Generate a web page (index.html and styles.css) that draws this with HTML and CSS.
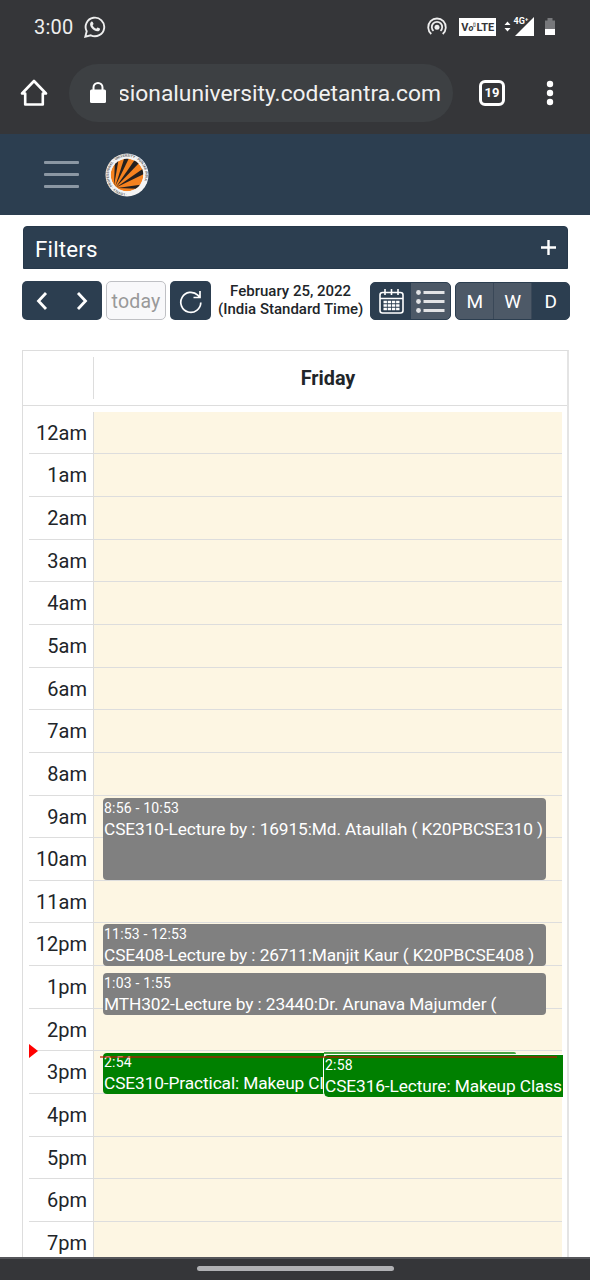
FILE: index.html
```html
<!DOCTYPE html>
<html lang="en">
<head>
<meta charset="utf-8">
<meta name="viewport" content="width=device-width">
<title>Schedule</title>
<link rel="stylesheet" href="styles.css">
</head>
<body>
<div class="phone">
  <header class="browser">
    <div class="status">
      <span class="clock">3:00</span>
      <svg class="whatsapp" width="22" height="22" viewBox="0 0 22 22"><path d="M2.700 15.300 1.300 20.700l5.500-1.400A9.300 9.300 0 1 0 2.700 15.300Z" fill="none" stroke="#eee" stroke-width="1.900"/><path d="M7.200 5.800c.5-.5 1.200-.4 1.500.2l.8 1.800c.1.500-.6 1.100-.9 1.500.9 1.700 2.100 2.800 3.800 3.500.5-.5.9-1.300 1.400-1.200l2 1c.5.3.2 1.500-.5 2.100-1.300 1-3.200.6-5.100-.5-2-1.200-3.500-3-4-5-.3-1.400 0-2.600 1-3.400Z" fill="#eee"/></svg>
      <svg class="hotspot" width="20" height="20" viewBox="0 0 20 20"><g fill="none" stroke="#eee" stroke-width="1.800"><path d="M4.300 17A8.800 8.800 0 1 1 15.700 17"/><path d="M6.500 13.900A5.200 5.200 0 1 1 13.500 13.900"/></g><circle cx="10" cy="10.300" r="2.500" fill="#eee"/></svg>
      <span class="volte">V<i>o</i><sup>▯</sup>LTE</span>
      <svg class="signal" width="31" height="24" viewBox="0 0 31 24"><path d="M.5 10 3.500 6.500 6.500 10ZM.5 13h6l-3 3.500Z" fill="#fff"/><path d="M11 21 30 2V21Z" fill="#fff"/><text x="9.500" y="8.500" class="net">4G⁺</text></svg>
      <svg class="battery" width="10" height="18" viewBox="0 0 10 18"><path d="M0 2.500h2.500V0h5v2.500H10V11H0Z" fill="#77787b"/><path d="M0 11h10v6H0Z" fill="#fff"/></svg>
    </div>
    <div class="address">
      <svg class="home" width="28" height="28" viewBox="0 0 28 28"><path d="M2 14.500 14 2l12 12.500H22.800V25.500H5.200V14.500Z" fill="none" stroke="#fff" stroke-width="2.600" stroke-linejoin="round"/></svg>
      <div class="url">
        <svg width="16" height="22" viewBox="0 0 16 22"><path d="M3.500 9V5.500a4.500 4.500 0 0 1 9 0V9" fill="none" stroke="#fff" stroke-width="2"/><rect y="7.500" width="16" height="13.500" rx="1.500" fill="#fff"/></svg>
        <div class="clip"><span>sionaluniversity.codetantra.com</span></div>
      </div>
      <span class="tabs">19</span>
      <svg class="dots" width="8" height="26" viewBox="0 0 8 26"><g fill="#fff"><circle cx="4" cy="4" r="3.200"/><circle cx="4" cy="13" r="3.200"/><circle cx="4" cy="22" r="3.200"/></g></svg>
    </div>
  </header>
  <nav class="nav">
    <div class="burger"><i></i><i></i><i></i></div>
    <svg width="44" height="44" viewBox="0 0 44 44">
      <defs><clipPath id="disc"><circle cx="22" cy="22" r="16.300"/></clipPath><path id="ring" d="M22 40.300A18.300 18.300 0 1 1 22.100 40.300"/></defs>
      <circle cx="22" cy="22" r="21.500" fill="#f4f4f4"/>
      <text class="seal"><textPath href="#ring">· LOVELY · PROFESSIONAL · UNIVERSITY · PUNJAB INDIA</textPath></text>
      <g clip-path="url(#disc)"><circle cx="22" cy="22" r="16.300" fill="#f5821f"/><g fill="#24201f"><path d="M9 33 10 4 14 4Z"/><path d="M10 34 20 3 25 3Z"/><path d="M11 34 31 5 35 9Z"/><path d="M11 34.500 39 15 41 20Z"/><path d="M12 35 40 31 39 36Z"/></g></g>
    </svg>
  </nav>
  <main class="page">
    <div class="filters"><span>Filters</span><svg width="15" height="15" viewBox="0 0 15 15"><path d="M7.500 0V15M0 7.500H15" stroke="#fff" stroke-width="2.400"/></svg></div>
    <div class="toolbar">
      <div class="btn arrows">
        <svg width="12" height="20" viewBox="0 0 12 20"><path d="M10 2 2.500 10 10 18"/></svg>
        <svg width="12" height="20" viewBox="0 0 12 20"><path d="M2 2 9.500 10 2 18"/></svg>
      </div>
      <div class="btn today">today</div>
      <div class="btn reload"><svg width="24" height="24" viewBox="0 0 24 24"><path d="M21.800 12.500A10 10 0 1 1 18.800 5.200L20.500 7M21 1V7.500H14.500" fill="none" stroke="#fff" stroke-width="1.700"/></svg></div>
      <h2 class="date"><span>February 25, 2022</span><br><span class="zone">(India Standard Time)</span></h2>
      <div class="btn group views">
        <div class="on"><svg width="25" height="25" viewBox="0 0 25 25"><g fill="none" stroke="#fff" stroke-width="1.600"><rect x="1" y="3.500" width="23" height="20.500" rx="2.500"/><path d="M1 9.500H24M6 0V6M12.500 0V6M19 0V6"/></g><path d="M4.500 13H20.500M4.500 16.500H20.500M4.500 20H20.500" stroke="#fff" stroke-width="2.400" stroke-dasharray="3.400 .8"/></svg></div>
        <div><svg width="29" height="25" viewBox="0 0 29 25"><path d="M7.500 3.500H28.500M7.500 12.500H28.500M7.500 21.500H28.500" stroke="#e2e3e5" stroke-width="2.800"/><g fill="#e2e3e5"><circle cx="2.500" cy="3.500" r="2.400"/><circle cx="2.500" cy="12.500" r="2.400"/><circle cx="2.500" cy="21.500" r="2.400"/></g></svg></div>
      </div>
      <div class="btn group spans"><div>M</div><div>W</div><div class="on">D</div></div>
    </div>
    <section class="calendar">
      <div class="head"><div class="corner"></div><div class="day">Friday</div></div>
      <div class="grid">
        <div class="hour">12am</div><div class="hour">1am</div><div class="hour">2am</div><div class="hour">3am</div><div class="hour">4am</div><div class="hour">5am</div><div class="hour">6am</div><div class="hour">7am</div><div class="hour">8am</div><div class="hour">9am</div><div class="hour">10am</div><div class="hour">11am</div><div class="hour">12pm</div><div class="hour">1pm</div><div class="hour">2pm</div><div class="hour">3pm</div><div class="hour">4pm</div><div class="hour">5pm</div><div class="hour">6pm</div><div class="hour">7pm</div>
        <div class="event e1"><small>8:56 - 10:53</small><p><span>CSE310-Lecture by : 16915:Md. Ataullah ( K20PBCSE310 )</span></p></div>
        <div class="event e2"><small>11:53 - 12:53</small><p><span>CSE408-Lecture by : 26711:Manjit Kaur ( K20PBCSE408 )</span></p></div>
        <div class="event e3"><small>1:03 - 1:55</small><p><span>MTH302-Lecture by : 23440:Dr. Arunava Majumder (</span></p></div>
        <div class="event live e4"><small>2:54</small><p><span>CSE310-Practical: Makeup Cl</span></p></div>
        <div class="sliver"></div>
        <div class="event live e5"><small>2:58</small><p><span>CSE316-Lecture: Makeup Class</span></p></div>
        <div class="now"></div><div class="marker"></div>
      </div>
    </section>
  </main>
  <footer class="gesture"><i></i></footer>
</div>
</body>
</html>
```
FILE: styles.css
```css
* { box-sizing: border-box; }
body { margin: 0; font-family: Roboto, "Liberation Sans", sans-serif; color: #212529; background: #fff; }
svg { display: block; flex: none; }
.phone { width: 590px; height: 1280px; display: flex; flex-direction: column; overflow: hidden; }
.browser { height: 134px; background: #353639; flex: none; }
.status { height: 54px; display: flex; align-items: center; padding: 0 35px 0 34px; color: #eee; }
.clock { font-size: 20px; width: 51px; letter-spacing: .2px; }
.hotspot { margin-left: 321px; }
.volte { width: 37px; height: 18px; margin-left: 12px; background: #fff; color: #353639; font-size: 11px; font-weight: 700; line-height: 19px; text-align: center; white-space: nowrap; }
.volte i { font-size: 9px; }
.volte sup { font-size: 5px; line-height: 0; }
.signal { margin-left: 8px; }
.net { font-size: 9px; font-weight: 700; fill: #fff; font-family: Roboto, sans-serif; }
.battery { margin-left: 10px; }
.address { height: 78px; display: flex; align-items: center; padding: 0 0 0 20px; }
.url { width: 384px; height: 58px; margin-left: 21px; padding-left: 21px; border-radius: 29px; background: #3d4043; display: flex; align-items: center; }
.clip { width: 325px; margin-left: 14px; overflow: hidden; white-space: nowrap; color: #f1f1f1; font-size: 22.800px; line-height: 32px; padding-top: 1px; }
.clip span { margin-left: -2px; }
.tabs { width: 26px; height: 26px; margin-left: 26px; border: 3px solid #fff; border-radius: 6px; color: #fff; font-size: 13px; line-height: 20px; font-weight: 700; text-align: center; }
.dots { margin-left: 41px; }
.nav { height: 81px; flex: none; background: #2c3e50; display: flex; align-items: center; padding-left: 44px; }
.burger { width: 35px; height: 27px; margin-right: 26px; display: flex; flex-direction: column; justify-content: space-between; }
.burger i { height: 3px; background: #8b97a3; border-radius: 1px; }
.seal { font-size: 3.500px; fill: #666; font-weight: 700; }
.page { flex: 1; min-height: 0; overflow: hidden; padding: 11px 21px 0 22px; }
.filters { height: 43px; margin: 0 1px 0 1px; background: #2c3e50; color: #fff; border: 1px solid #26384a; border-radius: 4px 4px 0 0; display: flex; align-items: center; justify-content: space-between; padding: 3px 11px 0 11px; font-size: 22.300px; letter-spacing: .2px; }
.filters svg { margin-top: -4px; }
.toolbar { display: flex; height: 39px; margin-top: 12px; }
.btn { height: 39px; border-radius: 5px; background: #2c3e50; color: #fff; display: flex; align-items: center; justify-content: center; flex: none; }
.arrows { width: 80px; gap: 28px; }
.arrows path { fill: none; stroke: #fff; stroke-width: 2.800; }
.today { width: 60px; margin-left: 4px; padding-top: 2px; background: #f8f8fa; border: 1px solid #bfc0c4; color: #999; font-size: 19.500px; letter-spacing: .2px; }
.reload { width: 41px; margin-left: 4px; padding-top: 2px; }
.date { margin: 0 0 0 7px; padding-top: 1px; width: 151px; font-size: 15px; line-height: 18px; font-weight: 500; text-align: center; white-space: nowrap; }
.group { height: 38px; overflow: hidden; margin-top: 1px; border: 1px solid #2c3e50; background: #4d5967; }
.group div { flex: 1; height: 100%; display: flex; align-items: center; justify-content: center; }
.group .on { background: #2c3e50; }
.views { width: 81px; margin-left: 7px; }
.spans { width: 115px; margin-left: 4px; font-size: 19px; }
.spans div + div { border-left: 1px solid #3a4858; }
.calendar { width: 547px; margin-top: 30px; border: 1px solid #ddd; border-right: 2px solid #e4e4e4; }
.head { height: 55px; border-bottom: 1px solid #ddd; display: flex; padding: 6px 5px 6px 0; }
.corner { width: 71px; border-right: 1px solid #ddd; }
.day { flex: 1; text-align: center; font-size: 19.800px; line-height: 43px; font-weight: 700; }
.grid { position: relative; margin: 5.600px 5px 0 6px; background: linear-gradient(90deg, #fff 64px, #ddd 64px, #ddd 65px, #fdf6e3 65px); }
.hour { height: 42.670px; border-bottom: 1px solid #ddd; width: 100%; padding-right: calc(100% - 58px); text-align: right; font-size: 20px; line-height: 42px; white-space: nowrap; }
.event { position: absolute; left: 74px; width: 443px; height: 42px; overflow: hidden; border-radius: 4px; background: #808080; color: #fff; padding: 2px 0 0 1px; white-space: nowrap; }
.event small { display: block; font-size: 14px; line-height: 16px; letter-spacing: .2px; }
.event p { margin: 2px 0 0; font-size: 17.300px; line-height: 23px; letter-spacing: -.1px; }
.e1 { top: 386px; height: 82px; }
.e2 { top: 512px; }
.e3 { top: 561px; }
.live { background: #008000; }
.e4 { top: 641px; width: 221px; height: 41px; padding-top: 1px; border-radius: 4px 0 0 4px; }
.e5 { top: 642px; left: 294px; width: 240px; height: 43px; border: 1px solid #fff; border-width: 1px 0 0 1px; border-radius: 5px 0 0 5px; }
.e5 p { letter-spacing: -.1px; }
.sliver { position: absolute; top: 640px; left: 295px; width: 192px; height: 2px; background: #47a447; border-radius: 0 3px 0 0; }
.now { position: absolute; top: 644px; left: 71px; width: 457px; height: 2px; background: rgba(190, 20, 0, .6); }
.marker { position: absolute; top: 632px; left: 0; border-left: 9px solid #f00; border-top: 7px solid transparent; border-bottom: 7px solid transparent; }
.gesture { height: 23px; flex: none; background: #353639; border-top: 2px solid #55565a; display: flex; justify-content: center; padding-top: 7px; }
.gesture i { width: 197px; height: 5px; border-radius: 3px; background: #b0b1b4; }
```
